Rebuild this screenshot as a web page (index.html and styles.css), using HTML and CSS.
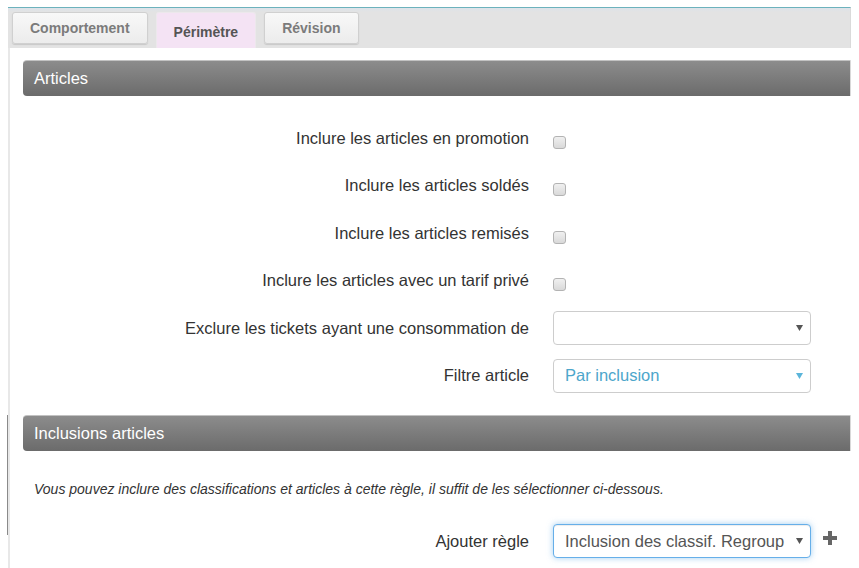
FILE: index.html
```html
<!DOCTYPE html>
<html lang="fr">
<head>
<meta charset="utf-8">
<title>Périmètre</title>
<link rel="stylesheet" href="styles.css">
</head>
<body>
<div class="page">
  <div class="tabbar">
    <div class="tab">Comportement</div>
    <div class="tab active">Périmètre</div>
    <div class="tab">Révision</div>
  </div>
  <div class="content">
    <div class="section-header">Articles</div>
    <div class="form form-articles">
      <label class="form-label">Inclure les articles en promotion</label>
      <div class="control"><span class="checkbox"></span></div>

      <label class="form-label">Inclure les articles soldés</label>
      <div class="control"><span class="checkbox"></span></div>

      <label class="form-label">Inclure les articles remisés</label>
      <div class="control"><span class="checkbox"></span></div>

      <label class="form-label">Inclure les articles avec un tarif privé</label>
      <div class="control"><span class="checkbox"></span></div>

      <label class="form-label">Exclure les tickets ayant une consommation de</label>
      <div class="control">
        <div class="select"><span class="select-text"></span>
          <svg class="caret" width="7" height="6" viewBox="0 0 7 6"><path d="M0 0H7L3.5 6Z"/></svg>
        </div>
      </div>

      <label class="form-label">Filtre article</label>
      <div class="control">
        <div class="select select-info"><span class="select-text">Par inclusion</span>
          <svg class="caret" width="7" height="6" viewBox="0 0 7 6"><path d="M0 0H7L3.5 6Z"/></svg>
        </div>
      </div>
    </div>

    <div class="section-header">Inclusions articles</div>
    <p class="hint">Vous pouvez inclure des classifications et articles à cette règle, il suffit de les sélectionner ci-dessous.</p>
    <div class="form form-rules">
      <label class="form-label">Ajouter règle</label>
      <div class="control control-add">
        <div class="select select-focus"><span class="select-text">Inclusion des classif. Regroup</span>
          <svg class="caret" width="7" height="6" viewBox="0 0 7 6"><path d="M0 0H7L3.5 6Z"/></svg>
        </div>
        <svg class="plus" width="14" height="14" viewBox="0 0 14 14"><rect x="5" y="0" width="4" height="14"/><rect x="0" y="5" width="14" height="4"/></svg>
      </div>
    </div>
  </div>
  <div class="frame-mark"></div>
</div>
</body>
</html>
```

FILE: styles.css
```css
html, body {
  height: 100%;
}

body {
  margin: 7px 8px 0 8px;
  font-family: "Liberation Sans", Arial, sans-serif;
  color: #333;
  background: #fff;
  overflow: hidden;
}

.page {
  display: flex;
  flex-direction: column;
  height: 100%;
}

/* ---------- Tabs ---------- */
.tabbar {
  box-sizing: border-box;
  height: 41px;
  flex: none;
  border-top: 1px solid #6cb2bd;
  border-right: 1px solid #dadada;
  background: linear-gradient(#dde3ea 0, #e3e3e3 4px, #e3e3e3 100%);
  display: flex;
  align-items: flex-start;
  gap: 8px;
  padding: 4px 0 0 4px;
}

.tab {
  box-sizing: border-box;
  height: 32px;
  padding: 0 17px;
  display: flex;
  align-items: center;
  font-size: 14px;
  font-weight: bold;
  color: #7b7b7b;
  background: linear-gradient(#f8f8f8, #ececec);
  border: 1px solid #d0d0d0;
  border-radius: 3px;
  box-shadow: 0 1px 1px rgba(0, 0, 0, 0.12);
  white-space: nowrap;
}

.tab.active {
  height: 36px;
  padding-top: 3px;
  color: #555;
  background: #f4e3f4;
  border-color: #ece8ec;
  border-bottom: none;
  border-radius: 3px 3px 0 0;
  box-shadow: none;
}

/* ---------- Content ---------- */
.content {
  flex: 1;
  border-left: 2px solid #e8e8e8;
  padding: 12px 0 0 13px;
}

.section-header {
  box-sizing: border-box;
  height: 36px;
  line-height: 34px;
  padding-left: 11px;
  font-size: 16.5px;
  color: #fff;
  background: linear-gradient(#8c8c8c, #6b6b6b);
  border-top: 1px solid #c2c2c2;
  border-right: 1px solid #d9d9d9;
  border-radius: 4px 0 0 4px;
}

.form {
  display: grid;
  grid-template-columns: 506px 258px;
  grid-auto-rows: 34px;
  column-gap: 24px;
  row-gap: 13.5px;
  align-items: center;
}

.form-articles {
  padding-top: 25px;
  margin-bottom: 22.5px;
}

.form-label {
  text-align: right;
  font-size: 16.5px;
  color: #333;
  white-space: nowrap;
}

.control {
  display: flex;
  align-items: center;
  height: 34px;
}

.checkbox {
  box-sizing: border-box;
  width: 13px;
  height: 13px;
  margin-top: 8px;
  border: 1px solid #b3b3b3;
  border-radius: 3px;
  background: linear-gradient(#f0f0f0, #d9d9d9);
}

.select {
  box-sizing: border-box;
  width: 258px;
  height: 34px;
  flex: none;
  display: flex;
  align-items: center;
  padding: 0 7px 0 11px;
  border: 1px solid #cdcdcd;
  border-radius: 4px;
  background: #fff;
  font-size: 16.5px;
  color: #555;
}

.select-text {
  flex: 1;
  white-space: nowrap;
  margin-right: 12px;
}

.caret {
  flex: none;
  fill: #555;
}

.select-info {
  color: #4da6cb;
}

.select-info .caret {
  fill: #5bb5da;
}

.select-focus {
  border-color: #66afe9;
  box-shadow: inset 0 1px 1px rgba(0, 0, 0, 0.075), 0 0 6px rgba(102, 175, 233, 0.6);
}

.control-add {
  gap: 12px;
}

.plus {
  flex: none;
  fill: #666;
  margin-top: -6px;
}

.hint {
  margin: 30px 0 27px 0;
  padding-left: 11px;
  font-size: 14px;
  line-height: 16px;
  font-style: italic;
  color: #333;
}

.frame-mark {
  position: absolute;
  left: 7px;
  top: 415px;
  width: 1px;
  height: 120px;
  background: #8a8a8a;
}
```
